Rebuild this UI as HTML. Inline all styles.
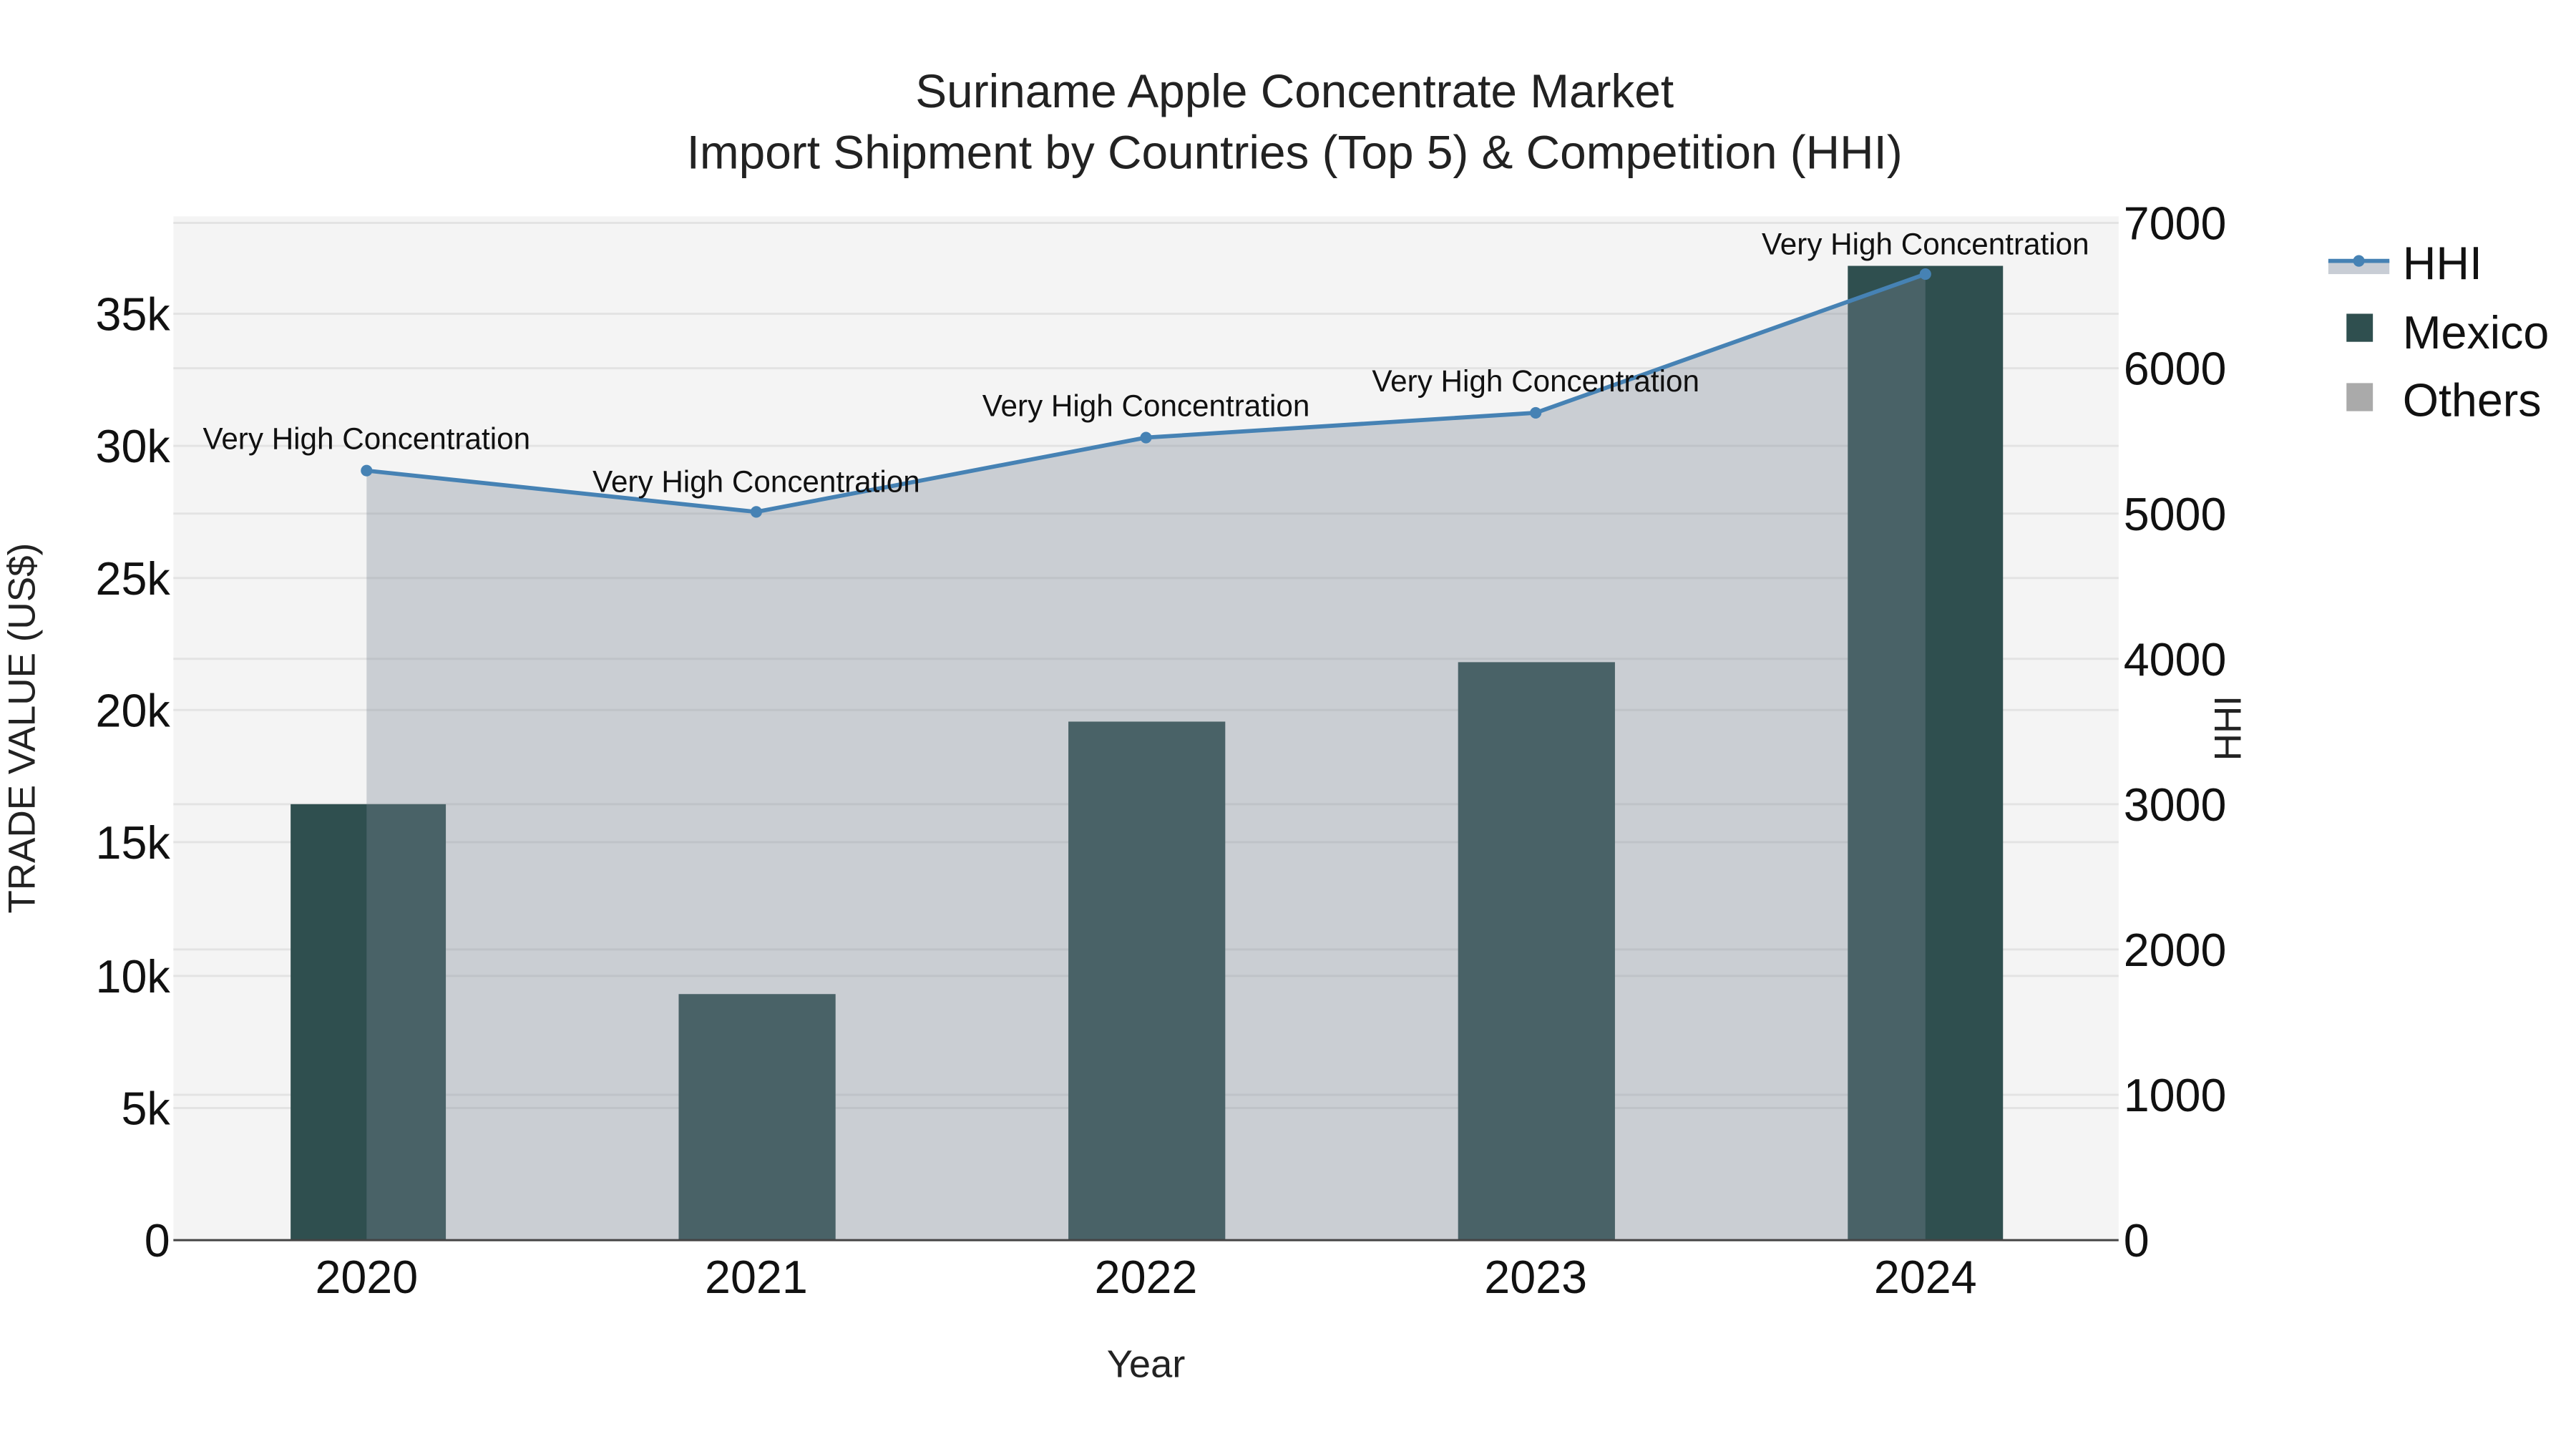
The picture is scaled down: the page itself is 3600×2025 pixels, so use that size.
<!DOCTYPE html>
<html><head><meta charset="utf-8"><style>html,body{margin:0;padding:0;background:#fff}svg{display:block}</style></head>
<body>
<svg width="3600" height="2025" viewBox="0 0 1560 877.5" xmlns="http://www.w3.org/2000/svg" font-family="'Liberation Sans', Arial, sans-serif">
<rect x="0" y="0" width="1560" height="877.5" fill="#fff"/>
<text x="784" y="65" font-size="28.5" text-anchor="middle" fill="#222">Suriname Apple Concentrate Market</text>
<text x="784" y="102" font-size="28.5" text-anchor="middle" fill="#222">Import Shipment by Countries (Top 5) &amp; Competition (HHI)</text>
<rect x="105" y="131" width="1178" height="620" fill="#f4f4f4"/>
<g stroke="#e3e3e3" stroke-width="1.3">
<line x1="105" x2="1283" y1="190" y2="190"/><line x1="105" x2="1283" y1="270" y2="270"/><line x1="105" x2="1283" y1="350" y2="350"/><line x1="105" x2="1283" y1="430" y2="430"/><line x1="105" x2="1283" y1="510" y2="510"/><line x1="105" x2="1283" y1="591" y2="591"/><line x1="105" x2="1283" y1="671" y2="671"/>
<line x1="105" x2="1283" y1="135" y2="135"/><line x1="105" x2="1283" y1="223" y2="223"/><line x1="105" x2="1283" y1="311" y2="311"/><line x1="105" x2="1283" y1="399" y2="399"/><line x1="105" x2="1283" y1="487" y2="487"/><line x1="105" x2="1283" y1="575" y2="575"/><line x1="105" x2="1283" y1="663" y2="663"/>
</g>
<g fill="#2f4f4f">
<rect x="176" y="487" width="94" height="264"/>
<rect x="411" y="602" width="95" height="149"/>
<rect x="647" y="437" width="95" height="314"/>
<rect x="883" y="401" width="95" height="350"/>
<rect x="1119" y="161" width="94" height="590"/>
</g>
<path d="M222,285 L458,310 L694,265 L930,250 L1166,166 L1166,751 L222,751 Z" fill="rgb(122,134,148)" fill-opacity="0.35"/>
<polyline points="222,285 458,310 694,265 930,250 1166,166" fill="none" stroke="#4682b4" stroke-width="2.5"/>
<g fill="#4682b4"><circle cx="222" cy="285" r="3.5"/><circle cx="458" cy="310" r="3.5"/><circle cx="694" cy="265" r="3.5"/><circle cx="930" cy="250" r="3.5"/><circle cx="1166" cy="166" r="3.5"/></g>
<g font-size="18.3" text-anchor="middle" fill="#111">
<text x="222" y="272">Very High Concentration</text>
<text x="458" y="298">Very High Concentration</text>
<text x="694" y="252">Very High Concentration</text>
<text x="930" y="237">Very High Concentration</text>
<text x="1166" y="154">Very High Concentration</text>
</g>
<line x1="105" x2="1283" y1="751" y2="751" stroke="#444" stroke-width="1.3"/>
<g font-size="28" text-anchor="end" fill="#111">
<text x="103" y="761">0</text><text x="103" y="681">5k</text><text x="103" y="601">10k</text><text x="103" y="520">15k</text><text x="103" y="440">20k</text><text x="103" y="360">25k</text><text x="103" y="280">30k</text><text x="103" y="200">35k</text>
</g>
<g font-size="28" fill="#111">
<text x="1286" y="761">0</text><text x="1286" y="673">1000</text><text x="1286" y="585">2000</text><text x="1286" y="497">3000</text><text x="1286" y="409">4000</text><text x="1286" y="321">5000</text><text x="1286" y="233">6000</text><text x="1286" y="145">7000</text>
</g>
<g font-size="28" text-anchor="middle" fill="#111">
<text x="222" y="783">2020</text><text x="458" y="783">2021</text><text x="694" y="783">2022</text><text x="930" y="783">2023</text><text x="1166" y="783">2024</text>
</g>
<text x="694" y="834" font-size="23.5" text-anchor="middle" fill="#222">Year</text>
<text transform="translate(21,441) rotate(-90)" font-size="23" text-anchor="middle" fill="#222">TRADE VALUE (US$)</text>
<text transform="translate(1357,441) rotate(-90)" font-size="23" text-anchor="middle" fill="#222">HHI</text>
<rect x="1410" y="158" width="37" height="8" fill="#c8cdd5"/>
<line x1="1410" x2="1447" y1="158" y2="158" stroke="#4682b4" stroke-width="2.5"/>
<circle cx="1428.5" cy="158" r="3.5" fill="#4682b4"/>
<text x="1455" y="169" font-size="28" fill="#111">HHI</text>
<rect x="1421" y="190" width="16" height="17" fill="#2f4f4f"/>
<text x="1455" y="211" font-size="28" fill="#111">Mexico</text>
<rect x="1421" y="232" width="16" height="17" fill="#aaaaaa"/>
<text x="1455" y="252" font-size="28" fill="#111">Others</text>
</svg>
</body></html>
